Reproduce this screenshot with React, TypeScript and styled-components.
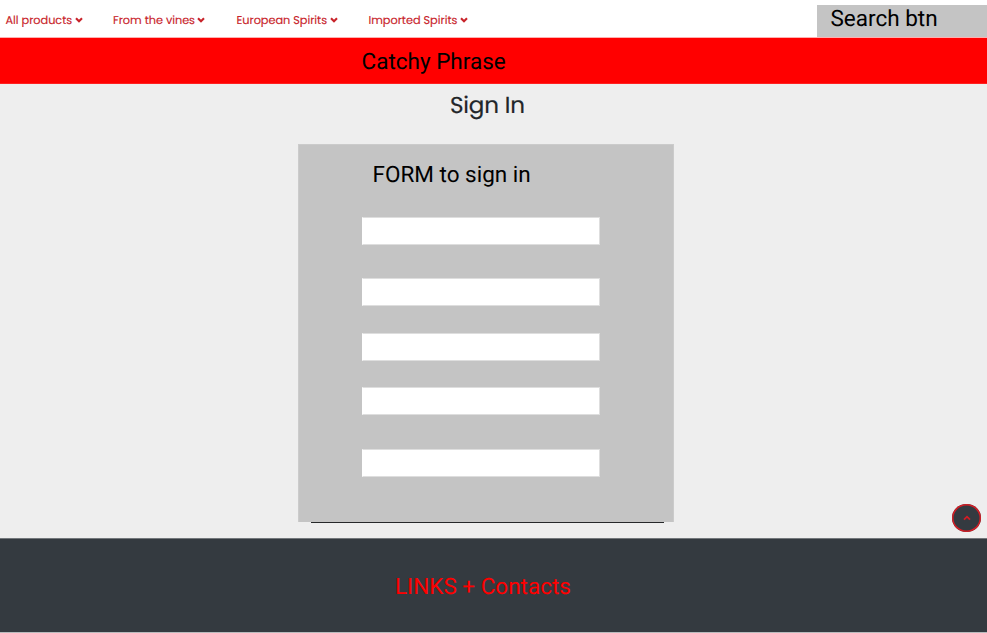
import React from 'react';
import styled, { createGlobalStyle } from 'styled-components';

const GlobalStyle = createGlobalStyle`
  *, *::before, *::after { box-sizing: border-box; }
  body { margin: 0; background: #fff; overflow: hidden; }
`;

const Page = styled.div`
  width: 987px;
  height: 633px;
  display: flex;
  flex-direction: column;
  background: #eee;
  color: #000;
  font-family: Roboto, sans-serif;
  font-size: 22.5px;
  line-height: 28px;
  text-rendering: geometricPrecision;
`;

const Header = styled.header`
  height: 38px;
  flex: none;
  display: flex;
  justify-content: space-between;
  align-items: flex-end;
  background: #fff;
  border-bottom: 1px solid #ffb0b0;
`;

const Nav = styled.nav`
  display: flex;
  align-self: stretch;
  padding: 3px 0 0 5.5px;
`;

const NavLink = styled.a<{ $slot: number }>`
  width: ${(p) => p.$slot}px;
  display: flex;
  align-items: center;
  gap: 2.5px;
  color: #c8232a;
  font: 400 11.3px/18px Poppins, Inter, sans-serif;
  letter-spacing: -0.03px;
  white-space: nowrap;
  text-decoration: none;
  -webkit-text-stroke: 0.15px #c8232a;
`;

const Chevron = styled.svg`
  width: 8px;
  height: 6px;
  flex: none;
  fill: none;
  stroke: #c8232a;
  stroke-width: 2.1;
`;

const Search = styled.div`
  width: 170px;
  height: 32px;
  padding-left: 13.5px;
  background: #c4c4c4;
  line-height: 28px;
`;

const Banner = styled.div`
  height: 46px;
  flex: none;
  padding: 10px 0 0 361.5px;
  background: #f00;
  border-bottom: 1px solid #ff2020;
`;

const Main = styled.main`
  height: 454px;
  flex: none;
  display: flex;
  flex-direction: column;
`;

const Title = styled.h1`
  margin: 5px 0 0 450px;
  height: 55px;
  font: 400 23px/34px Poppins, Inter, sans-serif;
  letter-spacing: -0.15px;
  color: #212529;
  -webkit-text-stroke: 0.2px #212529;
`;

const FormCard = styled.form`
  width: 376px;
  height: 378px;
  margin-left: 298px;
  padding: 16px 0 0 63px;
  background: #c4c4c4;
  border: 1px solid #cbcbcb;
  border-width: 1px 1px 0;
`;

const FormTitle = styled.h2`
  margin: 0 0 28px 10.5px;
  height: 28px;
  font: inherit;
`;

const Field = styled.input<{ $gap: number }>`
  display: block;
  width: 238px;
  height: 28px;
  margin: 0 0 ${(p) => p.$gap}px;
  padding: 0 8px;
  border: 1px solid #dedede;
  border-left-color: #fff;
  border-radius: 0;
  outline: none;
  background: #fff;
`;

const Rule = styled.hr`
  width: 353px;
  height: 1px;
  margin: 0 0 0 311px;
  border: 0;
  background: #26282a;
`;

const Footer = styled.footer`
  height: 95px;
  flex: none;
  padding: 34px 0 0 395px;
  background: #343a40;
  border-top: 1px solid #73777b;
  border-bottom: 1px solid #b9bbbd;
  color: #f00;
`;

const BackToTop = styled.button`
  position: fixed;
  left: 952px;
  top: 504px;
  width: 29px;
  height: 28px;
  padding: 0;
  display: grid;
  place-items: center;
  border: 0;
  box-shadow: inset 0 0 0 1.5px #d31d25;
  border-radius: 50%;
  background: #343a40;
`;

const links = [
  { label: 'All products', slot: 107.5 },
  { label: 'From the vines', slot: 123.5 },
  { label: 'European Spirits', slot: 132 },
  { label: 'Imported Spirits', slot: 110 },
];

const fieldGaps = [33, 27, 26, 34, 0];

export default function App() {
  return (
    <Page>
      <GlobalStyle />
      <Header>
        <Nav>
          {links.map((l) => (
            <NavLink key={l.label} $slot={l.slot}>
              <span>{l.label}</span>
              <Chevron viewBox="0 0 8 6"><path d="M1 1.2 4 4.2 7 1.2" /></Chevron>
            </NavLink>
          ))}
        </Nav>
        <Search>Search btn</Search>
      </Header>
      <Banner>Catchy Phrase</Banner>
      <Main>
        <Title>Sign In</Title>
        <FormCard>
          <FormTitle>FORM to sign in</FormTitle>
          {fieldGaps.map((gap, i) => (
            <Field key={i} $gap={gap} aria-label={`Field ${i + 1}`} />
          ))}
        </FormCard>
        <Rule />
      </Main>
      <Footer>LINKS + Contacts</Footer>
      <BackToTop aria-label="Back to top">
        <svg width="8" height="6" viewBox="0 0 8 6" fill="none" stroke="#d31d25" strokeWidth="1.8">
          <path d="M1 4.7 4 1.7 7 4.7" />
        </svg>
      </BackToTop>
    </Page>
  );
}
